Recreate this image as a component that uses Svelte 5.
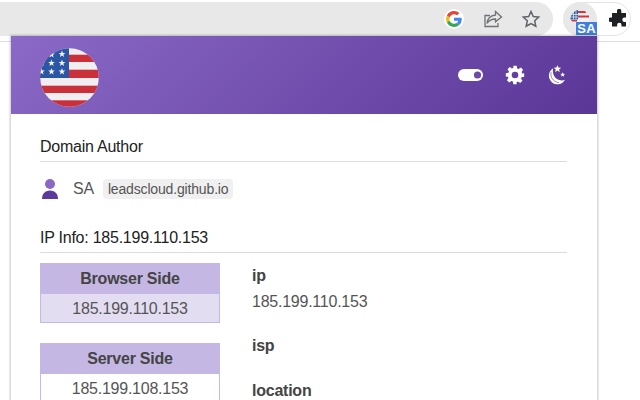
<script>
    const stars = [
        [11.5, 6.5], [22, 6], [1.5, 15], [11.5, 15], [22, 15], [1.5, 23.5], [11.5, 23.5], [22, 23.5]
    ];
    const starPoints = "0,-3.600 0.900,-1.100 3.400,-1.100 1.400,0.400 2.100,2.900 0,1.400 -2.100,2.900 -1.400,0.400 -3.400,-1.100 -0.900,-1.100";
</script>

<div class="page">
    <header class="toolbar">
        <div class="omnibox">
            <svg class="g" viewBox="-6 -6 60 60" width="20" height="20">
                <path fill="#ea4335" d="M24 9.500c3.500 0 6.700 1.200 9.200 3.600l6.900-6.900C35.900 2.400 30.500 0 24 0 14.600 0 6.500 5.400 2.600 13.200l8 6.200C12.400 13.700 17.700 9.500 24 9.500z"/>
                <path fill="#4285f4" d="M47 24.500c0-1.600-.1-3.100-.4-4.500H24v9h12.900c-.6 3-2.200 5.500-4.700 7.200l7.700 6C44.400 38 47 31.800 47 24.500z"/>
                <path fill="#fbbc05" d="M10.600 28.600c-.5-1.400-.8-3-.8-4.600s.3-3.200.8-4.600l-8-6.200C.9 16.500 0 20.100 0 24s.9 7.500 2.600 10.800l8-6.200z"/>
                <path fill="#34a853" d="M24 48c6.500 0 11.900-2.100 15.900-5.800l-7.700-6c-2.200 1.400-4.900 2.300-8.200 2.300-6.300 0-11.600-4.200-13.400-9.900l-8 6.200C6.500 42.600 14.600 48 24 48z"/>
            </svg>
            <svg class="share" viewBox="0 0 20 20" width="20" height="20" fill="none" stroke="#6f7276" stroke-width="1.300">
                <path d="M12.500 2.500 18.500 8l-6 4.800V10c-4 0-6.500 1.300-8.500 4.500.5-5 3.500-8 8.500-8.500z"/>
                <path d="M15 14v3.500H2V6.500H7"/>
            </svg>
            <svg class="star" viewBox="0 0 20 20" width="20" height="20" fill="none" stroke="#5f6368" stroke-width="1.500">
                <path d="M10 2.500l2.300 5 5.400.6-4 3.700 1.100 5.400-4.800-2.700-4.800 2.700 1.100-5.400-4-3.700 5.400-.6z"/>
            </svg>
        </div>
        <div class="pills">
            <div class="ext">
                <svg class="mini" viewBox="0 0 20 20" width="20" height="20">
                    <path fill="#f2f0f0" d="M4 3h12l3 4.500V14H1V7.500z"/>
                    <path fill="#d0363f" d="M8 3h7l1.500 2H8zM8 7.500h11v2H8zM1 12h6v1.500H2z"/>
                    <path fill="#2a5ca8" d="M8 2v9.500H0.500C0.500 7 3.500 3 8 2z"/>
                    <path stroke="#e8e8e8" stroke-width="0.800" d="M3.500 4v7.500M6 3v8.500M1.500 6.500h6.500M1 9h7"/>
                </svg>
                <span class="badge">SA</span>
            </div>
            <svg class="puzzle" viewBox="0 0 20 20" width="20" height="20">
                <path fill="#202124" d="M8 1.500a2.200 2.200 0 0 1 4.300 0V4H17v4.600h-1.500a2.200 2.200 0 0 0 0 4.400H17v4.500h-4.500V16a2.200 2.200 0 0 0-4.400 0v1.500H3V13H1.500a2.200 2.200 0 0 1 0-4.400H3V4h5z"/>
            </svg>
        </div>
    </header>

    <main class="popup">
        <section class="hero">
            <svg class="flag" viewBox="0 0 59 59" width="59" height="59">
                <defs>
                    <clipPath id="disc"><circle cx="29.500" cy="29.500" r="29.300"/></clipPath>
                </defs>
                <g clip-path="url(#disc)">
                    <rect width="59" height="59" fill="#f0eef0"/>
                    <rect y="6.700" width="59" height="7.300" fill="#c9303a"/>
                    <rect y="21.700" width="59" height="8.300" fill="#c9303a"/>
                    <rect y="37.700" width="59" height="7.300" fill="#c9303a"/>
                    <rect y="52.300" width="59" height="7" fill="#c9303a"/>
                    <rect width="29" height="30" fill="#2b56a6"/>
                    {#each stars as s}
                        <polygon points={starPoints} transform="translate({s[0]} {s[1]})" fill="#f3f3f6"/>
                    {/each}
                </g>
            </svg>
            <div class="actions">
                <svg class="toggle" viewBox="0 0 25 12" width="25" height="12">
                    <rect width="25" height="12" rx="6" fill="#fff"/>
                    <circle cx="19.500" cy="6" r="3.600" fill="#6d4aa8"/>
                </svg>
                <svg viewBox="0 0 24 24" width="20" height="20">
                    <path fill="#fff" fill-rule="evenodd" d="M10 1h4l.6 3.100 1.700.7 2.600-1.800 2.800 2.800-1.800 2.600.7 1.700L23 10v4l-3.100.6-.7 1.700 1.800 2.600-2.800 2.800-2.600-1.800-1.700.7L14 23h-4l-.6-3.100-1.700-.7-2.600 1.800-2.800-2.800 1.800-2.600-.7-1.700L1 14v-4l3.100-.6.7-1.700L3 5.100 5.800 2.300l2.600 1.800 1.700-.7zM12 8a4 4 0 1 0 0 8 4 4 0 0 0 0-8z"/>
                </svg>
                <svg viewBox="0 0 21 21" width="20" height="20">
                    <path fill="#fff" d="M7.500 3.500A9 9 0 1 0 20 15.500c-1 .5-2 .7-3 .7C10.800 16.200 6 11 7.500 3.500z"/>
                    <path fill="none" stroke="#6a479f" stroke-width="0.700" d="M5.500 7.500C4 12 7.500 18 13.500 18.500"/>
                    <path fill="#fff" d="M12 0l1 2.700 2.900.2-2.200 1.800.8 2.800-2.500-1.600-2.500 1.600.8-2.800-2.200-1.800 2.900-.2zM17.500 7.500l.7 1.700 1.800.2-1.400 1.100.5 1.800-1.600-1-1.600 1 .5-1.800-1.400-1.100 1.800-.2z"/>
                </svg>
            </div>
        </section>

        <section class="content">
            <h2>Domain Author</h2>
            <div class="author">
                <svg viewBox="0 0 18 22" width="18" height="22">
                    <circle cx="9" cy="6" r="5" fill="#8a68c4"/>
                    <path fill="#5b3a9b" d="M1 21c0-5 3-8.500 8-8.500s8 3.500 8 8.500z"/>
                </svg>
                <span class="name">SA</span>
                <span class="tag">leadscloud.github.io</span>
            </div>

            <h2 class="ip-title">IP Info: 185.199.110.153</h2>
            <div class="ip-grid">
                <div class="side">
                    <div class="ip-box tinted">
                        <div class="box-head">Browser Side</div>
                        <div class="box-value">185.199.110.153</div>
                    </div>
                    <div class="ip-box">
                        <div class="box-head">Server Side</div>
                        <div class="box-value">185.199.108.153</div>
                    </div>
                </div>
                <dl>
                    <dt>ip</dt>
                    <dd>185.199.110.153</dd>
                    <dt>isp</dt>
                    <dd></dd>
                    <dt>location</dt>
                </dl>
            </div>
        </section>
    </main>
</div>

<style>
    :global(body) {
        margin: 0;
        background: #fff;
        font-family: "Liberation Sans", Arial, sans-serif;
    }

    .page {
        position: relative;
        width: 640px;
        height: 400px;
        overflow: hidden;
        font-size: 16px;
        letter-spacing: -0.240px;
    }

    .toolbar {
        display: flex;
        height: 42px;
        box-sizing: border-box;
        padding-top: 2px;
        border-bottom: 1px solid #dadce0;
    }

    .omnibox {
        display: flex;
        align-items: center;
        justify-content: flex-end;
        width: 553px;
        height: 34px;
        box-sizing: border-box;
        padding-right: 12px;
        gap: 18px;
        background: #e8e8e8;
        border-radius: 0 17px 17px 0;
    }

    .g {
        background: #fff;
        border-radius: 50%;
        margin-right: 1px;
    }

    .pills {
        display: flex;
        align-items: center;
        height: 34px;
        margin-left: 10px;
        width: 68px;
        box-sizing: border-box;
        border: 1px solid #e4e4e4;
        border-radius: 17px;
    }

    .ext {
        position: relative;
        display: flex;
        align-items: center;
        justify-content: center;
        width: 34px;
        height: 34px;
        margin-left: -1px;
        background: #e8e8e8;
        border-radius: 50%;
    }

    .mini {
        margin-top: -2px;
    }

    .badge {
        position: absolute;
        right: 0;
        bottom: 1px;
        width: 21px;
        height: 13px;
        line-height: 13px;
        text-align: center;
        background: #3f7ee0;
        color: #fff;
        font-size: 13px;
        font-weight: bold;
        letter-spacing: 0.300px;
    }

    .puzzle {
        margin-left: 12px;
    }

    .popup {
        position: absolute;
        left: 11px;
        top: 36px;
        width: 586px;
        height: 380px;
        background: #fff;
        box-shadow: 0 0 2px 1px rgba(0, 0, 0, 0.22);
    }

    .hero {
        display: flex;
        align-items: center;
        justify-content: space-between;
        height: 78px;
        box-sizing: border-box;
        padding: 0 31px 0 29px;
        background: linear-gradient(135deg, #8b69c6, #5a3797);
    }

    .flag {
        margin-top: 5px;
    }

    .actions {
        display: flex;
        align-items: center;
        gap: 21px;
    }

    .toggle {
        margin-right: 1px;
    }

    .content {
        padding: 23px 30px 0 29px;
    }

    h2 {
        margin: 0;
        padding-bottom: 5px;
        font-size: 16px;
        font-weight: normal;
        line-height: 19px;
        color: #222;
        border-bottom: 1px solid #dcdcdc;
    }

    .author {
        display: flex;
        align-items: center;
        height: 20px;
        margin-top: 17px;
    }

    .author svg {
        margin-left: 1px;
    }

    .name {
        margin-left: 14px;
        color: #555;
    }

    .tag {
        margin-left: 9px;
        padding: 0 5px;
        height: 20px;
        line-height: 20px;
        font-size: 14px;
        letter-spacing: -0.160px;
        color: #555;
        background: #f0f0f0;
        border-radius: 4px;
    }

    .ip-title {
        margin-top: 29px;
    }

    .ip-grid {
        display: flex;
        margin-top: 10px;
    }

    .side {
        display: flex;
        flex-direction: column;
        gap: 20px;
        width: 180px;
    }

    .ip-box {
        border: 1px solid #c5b8e4;
        text-align: center;
    }

    .box-head {
        height: 30px;
        line-height: 29px;
        font-weight: bold;
        color: #444;
        background: #c4b7e3;
    }

    .box-value {
        height: 28px;
        line-height: 30px;
        color: #555;
    }

    .tinted .box-value {
        background: #e3ddf2;
    }

    dl {
        margin: 3px 0 0 32px;
    }

    dt {
        font-weight: bold;
        line-height: 20px;
        color: #444;
    }

    dd {
        margin: 6px 0 24px;
        line-height: 20px;
        color: #555;
    }

    dd:empty {
        margin: 0 0 25px;
    }
</style>
